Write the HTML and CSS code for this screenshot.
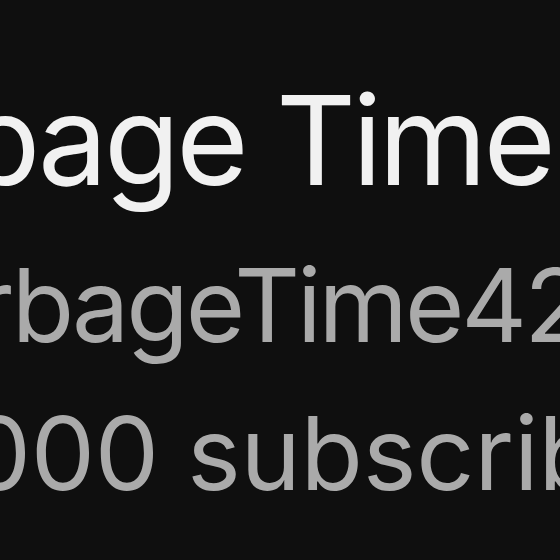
FILE: index.html
```html
<!DOCTYPE html>
<html lang="en">
<head>
    <meta charset="UTF-8">
    <meta name="viewport" content="width=device-width, initial-scale=1.0">
    <title>Garbage Time</title>
    <link rel="stylesheet" href="styles.css">
</head>
<body>
    <div class="channel-header">
        <h1 class="channel-name">Garbage Time</h1>
        <div class="channel-handle">@GarbageTime42</div>
        <div class="channel-subs">1,000 subscribers</div>
    </div>
</body>
</html>
```

FILE: styles.css
```css
/* General Styles */
* {
    box-sizing: border-box;
    margin: 0;
    padding: 0;
}

body {
    font-family: Inter, 'Liberation Sans', sans-serif;
    background-color: #0f0f0f;
    color: #f1f1f1;
    width: 560px;
    height: 560px;
    overflow: hidden;
}

/* Channel header (zoomed in) */
.channel-header {
    padding-top: 78px;
    display: flex;
    flex-direction: column;
    white-space: nowrap;
    letter-spacing: -0.02em;
}

.channel-name {
    font-size: 124px;
    line-height: 124px;
    font-weight: 400;
    color: #f1f1f1;
    letter-spacing: -0.03em;
    margin-left: -235px;
}

.channel-handle {
    font-size: 102px;
    line-height: 102px;
    color: #aaaaaa;
    letter-spacing: -0.03em;
    margin-top: 52px;
    margin-left: -248px;
}

.channel-subs {
    font-size: 102px;
    line-height: 102px;
    color: #aaaaaa;
    margin-top: 46px;
    margin-left: -101px;
}
```
